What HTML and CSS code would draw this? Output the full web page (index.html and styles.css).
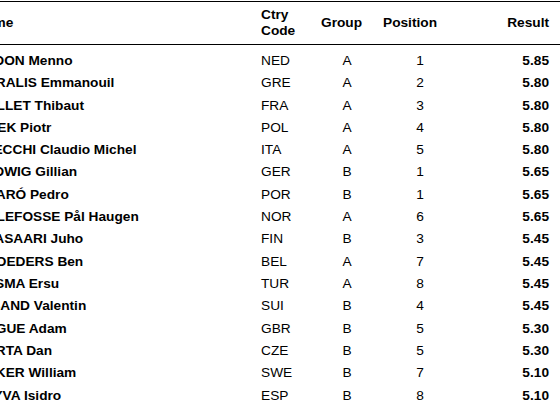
FILE: index.html
```html
<!DOCTYPE html>
<html>
<head>
<meta charset="utf-8">
<link rel="stylesheet" href="styles.css">
</head>
<body>
<div class="viewport">
<table class="results">
<colgroup>
<col class="c-name"><col class="c-ctry"><col class="c-group"><col class="c-pos"><col class="c-res">
</colgroup>
<thead>
<tr><th class="name">Name</th><th>Ctry<br>Code</th><th>Group</th><th>Position</th><th class="res">Result</th></tr>
</thead>
<tbody>
<tr><td class="name">VLOON Menno</td><td>NED</td><td class="ctr">A</td><td class="ctr">1</td><td class="res">5.85</td></tr>
<tr><td class="name">KARALIS Emmanouil</td><td>GRE</td><td class="ctr">A</td><td class="ctr">2</td><td class="res">5.80</td></tr>
<tr><td class="name">COLLET Thibaut</td><td>FRA</td><td class="ctr">A</td><td class="ctr">3</td><td class="res">5.80</td></tr>
<tr><td class="name">LISEK Piotr</td><td>POL</td><td class="ctr">A</td><td class="ctr">4</td><td class="res">5.80</td></tr>
<tr><td class="name">STECCHI Claudio Michel</td><td>ITA</td><td class="ctr">A</td><td class="ctr">5</td><td class="res">5.80</td></tr>
<tr><td class="name">LADWIG Gillian</td><td>GER</td><td class="ctr">B</td><td class="ctr">1</td><td class="res">5.65</td></tr>
<tr><td class="name">BUARÓ Pedro</td><td>POR</td><td class="ctr">B</td><td class="ctr">1</td><td class="res">5.65</td></tr>
<tr><td class="name">LILLEFOSSE Pål Haugen</td><td>NOR</td><td class="ctr">A</td><td class="ctr">6</td><td class="res">5.65</td></tr>
<tr><td class="name">ALASAARI Juho</td><td>FIN</td><td class="ctr">B</td><td class="ctr">3</td><td class="res">5.45</td></tr>
<tr><td class="name">BROEDERS Ben</td><td>BEL</td><td class="ctr">A</td><td class="ctr">7</td><td class="res">5.45</td></tr>
<tr><td class="name">SASMA Ersu</td><td>TUR</td><td class="ctr">A</td><td class="ctr">8</td><td class="res">5.45</td></tr>
<tr><td class="name">IMSAND Valentin</td><td>SUI</td><td class="ctr">B</td><td class="ctr">4</td><td class="res">5.45</td></tr>
<tr><td class="name">HAGUE Adam</td><td>GBR</td><td class="ctr">B</td><td class="ctr">5</td><td class="res">5.30</td></tr>
<tr><td class="name">BARTA Dan</td><td>CZE</td><td class="ctr">B</td><td class="ctr">5</td><td class="res">5.30</td></tr>
<tr><td class="name">BAKER William</td><td>SWE</td><td class="ctr">B</td><td class="ctr">7</td><td class="res">5.10</td></tr>
<tr><td class="name">LEYVA Isidro</td><td>ESP</td><td class="ctr">B</td><td class="ctr">8</td><td class="res">5.10</td></tr>
</tbody>
</table>
</div>
</body>
</html>
```

FILE: styles.css
```css
html, body {
  margin: 0;
  padding: 0;
  background: #fff;
}

.viewport {
  width: 560px;
  height: 416px;
  overflow: hidden;
  padding-top: 1px;
  box-sizing: border-box;
}

.results {
  margin-left: -29px;
  width: 589px;
  table-layout: fixed;
  border-collapse: collapse;
  font-family: "Liberation Sans", Arial, Helvetica, sans-serif;
  font-size: 13.7px;
  color: #000;
  border-top: 1px solid #000;
}

.c-name { width: 285px; }
.c-ctry { width: 60px; }
.c-group { width: 62px; }
.c-pos { width: 84px; }
.c-res { width: 98px; }

.results th {
  font-weight: bold;
  text-align: left;
  vertical-align: middle;
  line-height: 16px;
  padding: 5px 5px;
  border-bottom: 1px solid #000;
  white-space: nowrap;
}

.results td {
  line-height: 15px;
  padding: 3.67px 5px;
  white-space: nowrap;
  overflow: hidden;
}

.results tbody tr:first-child td {
  padding-top: 7.9px;
}

.results .name {
  font-weight: bold;
}

.results .ctr {
  text-align: center;
}

.results .res {
  text-align: right;
  padding-right: 11px;
  font-weight: bold;
}
```
